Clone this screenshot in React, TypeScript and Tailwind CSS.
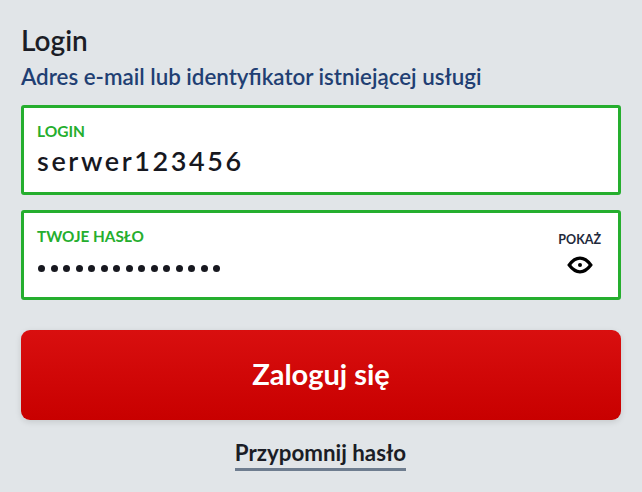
export default function App() {
  const font = { fontFamily: '"Lato", "Noto Sans", sans-serif' };
  return (
    <div style={font} className="w-[642px] h-[492px] overflow-hidden bg-[#e1e5e8] px-[21px] pt-[24px] flex flex-col">
      <h1 className="text-[28px] leading-[32px] font-semibold text-[#1b1d26]">Login</h1>
      <p className="mt-[7px] text-[22.35px] leading-[28px] font-semibold text-[#213f73]">Adres e-mail lub identyfikator istniejącej usługi</p>
      <div className="mt-[14px] h-[90px] border-[3px] border-[#25ae2e] rounded-[3px] bg-white pl-[13px] pt-[14px] flex flex-col">
        <div className="text-[15.5px] leading-[18px] font-bold text-[#25ae2e]">LOGIN</div>
        <div className="mt-[5px] text-[27px] leading-[32px] font-semibold tracking-[2.6px] text-[#17181f]">serwer123456</div>
      </div>
      <div className="mt-[15px] h-[90px] border-[3px] border-[#25ae2e] rounded-[3px] bg-white pl-[14px] pr-[17px] flex justify-between">
        <div className="flex flex-col pt-[14px]">
          <div className="-ml-px text-[15.3px] leading-[18px] font-bold text-[#25ae2e]">TWOJE HASŁO</div>
          <div className="mt-[20px] flex gap-[5.5px]">
            {Array.from({ length: 15 }).map((_, i) => (
              <span key={i} className="w-[7px] h-[7px] rounded-full bg-[#17181f]" />
            ))}
          </div>
        </div>
        <div className="flex flex-col items-center pt-[19px]">
          <div className="text-[12.5px] leading-[16px] font-bold text-[#1f2a3c]">POKAŻ</div>
          <svg className="mt-[8px]" width="26" height="18" viewBox="0 0 26 18" fill="none">
            <path d="M2.2 9 C6 3.8 9.5 2.2 13 2.2 C16.5 2.2 20 3.8 23.8 9 C20 14.2 16.5 15.8 13 15.8 C9.5 15.8 6 14.2 2.2 9 Z" stroke="#000" strokeWidth="3.2" strokeLinejoin="miter" />
            <circle cx="13" cy="9" r="2" fill="#000" />
          </svg>
        </div>
      </div>
      <button className="mt-[30px] h-[90px] w-full rounded-[9px] bg-gradient-to-b from-[#d90f0f] to-[#c80000] text-white text-[29px] font-bold shadow-[0_2px_6px_rgba(0,0,0,0.12)] pb-[2px]">
        Zaloguj się
      </button>
      <div className="mt-[17px] flex justify-center">
        <a className="mr-[1px] text-[22.3px] leading-[31px] font-bold text-[#1b1d26] border-b-[3px] border-[#6e7d8f]">Przypomnij hasło</a>
      </div>
    </div>
  );
}
